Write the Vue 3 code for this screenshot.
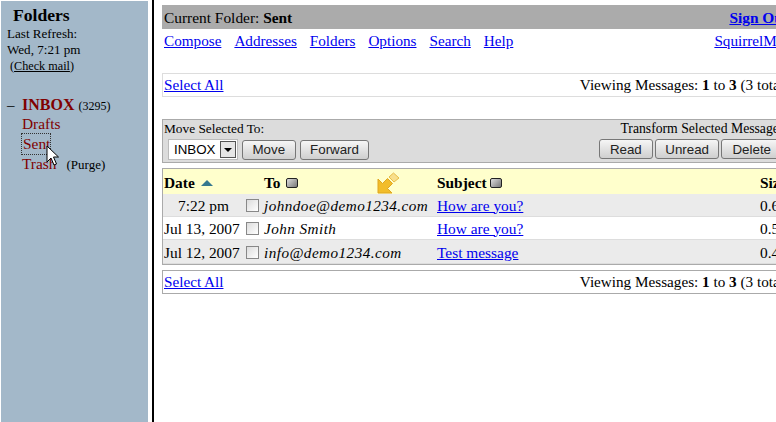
<script setup>
const nav = ['Compose', 'Addresses', 'Folders', 'Options', 'Search', 'Help']
const rows = [
  { date: '7:22 pm', to: 'johndoe@demo1234.com', subject: 'How are you?', size: '0.6k', center: true, tone: 'odd' },
  { date: 'Jul 13, 2007', to: 'John Smith', subject: 'How are you?', size: '0.5k', tone: 'even' },
  { date: 'Jul 12, 2007', to: 'info@demo1234.com', subject: 'Test message', size: '0.4k', tone: 'odd' },
]
</script>

<template>
  <div class="page">
    <aside class="side">
      <div class="side-title">Folders</div>
      <div class="refresh">Last Refresh:<br />Wed, 7:21 pm</div>
      <div class="check">(<a>Check mail</a>)</div>
      <div class="inbox"><span class="minus">–</span><b>INBOX</b><small>(3295)</small></div>
      <div class="folder">Drafts</div>
      <div class="folder"><span class="focus">Sent</span></div>
      <div class="folder">Trash<small class="purge">(Purge)</small></div>
      <svg class="cursor" width="13" height="21" viewBox="0 0 13 21">
        <path d="M1 1v16l4-4 3 7 2.500-1-3-7h5z" fill="#fff" stroke="#000" stroke-width="1" />
      </svg>
    </aside>
    <div class="divider"></div>
    <main class="main">
      <div class="topbar">
        <span>Current Folder: <b>Sent</b></span>
        <a class="signout">Sign Out</a>
      </div>
      <div class="navrow">
        <div class="navlinks"><a v-for="n in nav" :key="n">{{ n }}</a></div>
        <a class="brand">SquirrelMail</a>
      </div>
      <div class="pager first">
        <a>Select All</a>
        <span>Viewing Messages: <b>1</b> to <b>3</b> (3 total)</span>
      </div>
      <div class="toolbar">
        <div class="tool-left">
          <div class="tool-label">Move Selected To:</div>
          <div class="tool-row">
            <div class="select"><span>INBOX</span><i class="arrow"></i></div>
            <button>Move</button>
            <button>Forward</button>
          </div>
        </div>
        <div class="tool-right">
          <div class="tool-label">Transform Selected Messages:</div>
          <div class="tool-row">
            <button>Read</button>
            <button class="tight">Unread</button>
            <button>Delete</button>
          </div>
        </div>
      </div>
      <div class="list">
        <div class="row head">
          <div class="c-date">Date <i class="tri"></i></div>
          <div class="c-box"></div>
          <div class="c-to">To <i class="sort"></i></div>
          <div class="c-sub">Subject <i class="sort"></i></div>
          <div class="c-size">Size</div>
        </div>
        <div v-for="r in rows" :key="r.date" class="row" :class="r.tone">
          <div class="c-date" :class="{ center: r.center }">{{ r.date }}</div>
          <div class="c-box"><i class="check-box"></i></div>
          <div class="c-to"><em>{{ r.to }}</em></div>
          <div class="c-sub"><a>{{ r.subject }}</a></div>
          <div class="c-size">{{ r.size }}</div>
        </div>
        <svg class="pin" width="23" height="22" viewBox="0 0 23 22">
          <path d="M1 7 L1 21 L15 21 L10.500 16.500 L15.500 11.500 L10.500 6.500 L5.500 11.500 Z" fill="#f2bd2a" stroke="#dfa520" stroke-width="1" />
          <path d="M12 5 L16.500 1 L22 6 L17 10 Z" fill="#f8df8c" stroke="#e8bd48" stroke-width="1" />
        </svg>
      </div>
      <div class="pager last">
        <a>Select All</a>
        <span>Viewing Messages: <b>1</b> to <b>3</b> (3 total)</span>
      </div>
    </main>
  </div>
</template>

<style>
html, body { margin: 0; overflow: hidden; background: #fff; }
</style>

<style scoped>
.page {
  display: flex;
  width: 776px;
  height: 422px;
  overflow: hidden;
  position: relative;
  font: 15.4px/17px "Liberation Serif", serif;
  color: #000;
}
a { color: #00e; text-decoration: underline; }
.side {
  box-sizing: border-box;
  width: 147px;
  height: 421px;
  margin: 1px 0 0 1px;
  flex: none;
  background: #a3b8c9;
  padding: 5px 0 0 6px;
  position: relative;
  font-size: 13.1px;
}
.side-title { font-size: 17.6px; font-weight: bold; line-height: 18px; padding-left: 6px; }
.refresh { line-height: 16px; margin-top: 2px; }
.check { line-height: 16px; padding-left: 3px; font-size: 12.2px; }
.check a { color: #000; }
.inbox { margin-top: 23px; line-height: 16px; color: #800000; display: flex; align-items: baseline; }
.minus { color: #000; width: 15px; font-size: 15px; }
.inbox b { font-size: 16px; }
.inbox small { font-size: 12px; color: #000; margin-left: 4px; }
.folder { color: #800000; font-size: 15.4px; line-height: 20px; padding-left: 15px; }
.focus { outline: 1px dotted #333; display: inline-block; width: 28px; padding-left: 1px; line-height: 20px; height: 20px; box-sizing: border-box; }
.purge { color: #000; font-size: 13px; margin-left: 10px; }
.cursor { position: absolute; left: 45px; top: 144px; }
.divider {
  flex: none;
  width: 2px;
  margin-left: 4px;
  background: #000;
  height: 422px;
}
.main {
  flex: none;
  width: 629px;
  margin-left: 8px;
  padding-top: 5px;
}
.topbar {
  height: 24px;
  background: #ababab;
  display: flex;
  justify-content: space-between;
  align-items: center;
  padding: 0 2px;
}
.signout { font-weight: bold; font-size: 15.4px; margin-right: 1px; }
.navrow {
  display: flex;
  justify-content: space-between;
  padding: 3px 1px 0 2px;
  height: 41px;
  font-size: 15.2px;
}
.brand { margin-right: -2px; }
.navlinks { display: flex; gap: 13px; }
.pager {
  box-sizing: border-box;
  height: 24px;
  border: 1px solid #ddd;
  display: flex;
  justify-content: space-between;
  align-items: center;
  padding: 0 1px 2px;
  background: #fff;
  font-size: 15.2px;
}
.pager.last { border-color: #aaa; margin-top: 5px; }
.toolbar {
  box-sizing: border-box;
  height: 44px;
  margin-top: 22px;
  background: #dcdcdc;
  border: 1px solid #aaa;
  display: flex;
  justify-content: space-between;
  font-size: 13.33px;
}
.tool-left { padding-left: 1px; }
.tool-left button { padding: 0 9.5px; }
.tool-left .tool-row { gap: 4px; }
.tool-right { text-align: right; padding-right: 8px; }
.tool-right .tool-label { font-size: 13.7px; margin-right: -6px; }
.tool-label { line-height: 18px; height: 19px; }
.tool-row { display: flex; gap: 5px; justify-content: flex-end; align-items: center; padding-left: 4px; }
.tool-right .tool-row { gap: 2.5px; }
.select {
  box-sizing: border-box;
  width: 70px;
  height: 21px;
  background: #fff;
  border: 1px solid #bbb;
  display: flex;
  align-items: center;
  justify-content: space-between;
  font: 13.33px "Liberation Sans", sans-serif;
  padding: 0 1px 0 5px;
}
.arrow {
  box-sizing: border-box;
  width: 16px;
  height: 17px;
  border: 1px solid #555;
  background: #e6e6e6;
  position: relative;
}
.arrow::after {
  content: "";
  position: absolute;
  left: 3px;
  top: 6px;
  border: 4px solid transparent;
  border-top: 4px solid #000;
  border-bottom: 0;
}
button {
  box-sizing: border-box;
  height: 20px;
  border: 1px solid #777;
  border-radius: 3px;
  background: linear-gradient(#f6f6f6, #dedede 60%, #cfcfcf);
  font: 13.33px "Liberation Sans", sans-serif;
  color: #222;
  padding: 0 10px;
}
button.tight { padding: 0 9px; }
.list {
  box-sizing: border-box;
  margin-top: 5px;
  height: 97px;
  border: 1px solid #aaa;
  position: relative;
  background: #ddd;
  width: 636px;
}
.row {
  display: flex;
  align-items: center;
  height: 22px;
  margin-bottom: 1px;
}
.row.head { height: 25px; margin-bottom: 0; background: #ffc; font-weight: bold; padding-top: 2px; box-sizing: border-box; }
.odd { background: #ebebeb; }
.even { background: #fff; }
.row:last-of-type { height: 23px; margin: 1px 0 0; padding-top: 2px; box-sizing: border-box; }
.c-date { width: 82px; padding-left: 1px; flex: none; }
.c-date.center { text-align: center; padding-right: 3px; width: 79px; }
.c-box { width: 18px; flex: none; display: flex; }
.c-to { width: 173px; flex: none; }
.c-to em { font-size: 15.2px; letter-spacing: .45px; }
.c-sub { width: 323px; flex: none; }
.c-size { flex: none; }
.check-box {
  box-sizing: border-box;
  width: 13px;
  height: 13px;
  border: 1px solid #888;
  background: linear-gradient(135deg, #dcdcdc, #fff);
}
.tri {
  display: inline-block;
  border: 6px solid transparent;
  border-top: 0;
  border-bottom: 6px solid #36788f;
  vertical-align: 2px;
  margin-left: 2px;
}
.sort {
  display: inline-block;
  box-sizing: border-box;
  width: 12px;
  height: 10px;
  border: 1px solid #222;
  border-radius: 2px;
  background: linear-gradient(135deg, #ddd, #777);
  vertical-align: 0;
}
.c-to .sort { margin-left: 2px; }
.pin { position: absolute; left: 214px; top: 3px; }
</style>
